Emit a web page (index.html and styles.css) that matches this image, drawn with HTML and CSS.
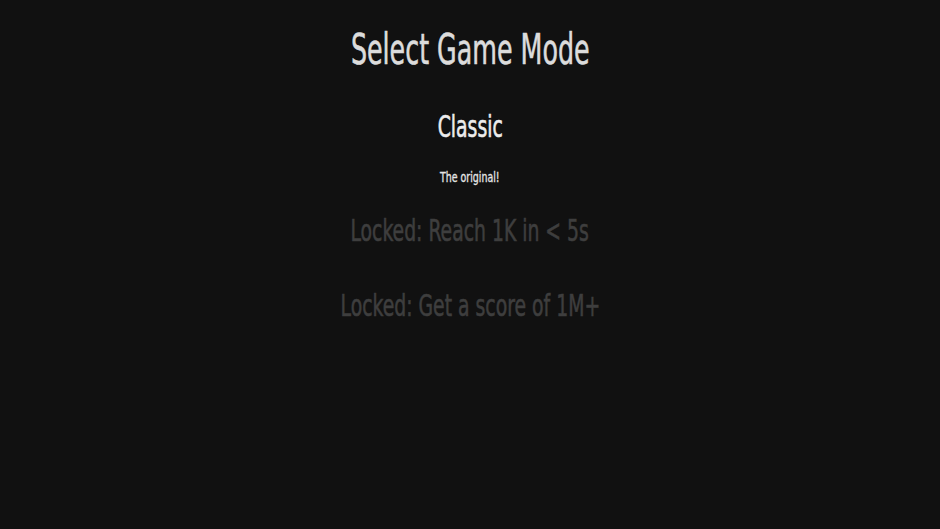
FILE: index.html
```html
<!DOCTYPE html>
<html lang="en">
<head>
<meta charset="utf-8">
<title>Select Game Mode</title>
<link rel="stylesheet" href="styles.css">
</head>
<body>
<main class="menu">
  <h1 class="title"><span class="narrow">Select Game Mode</span></h1>
  <ul class="modes">
    <li class="mode">
      <h2 class="mode-name"><span class="narrow">Classic</span></h2>
      <p class="mode-desc"><span class="narrow">The original!</span></p>
    </li>
    <li class="mode locked">
      <h2 class="mode-name"><span class="narrow">Locked: Reach 1K in &lt; 5s</span></h2>
    </li>
    <li class="mode locked">
      <h2 class="mode-name"><span class="narrow">Locked: Get a score of 1M+</span></h2>
    </li>
  </ul>
</main>
</body>
</html>
```

FILE: styles.css
```css
html, body {
  margin: 0;
  padding: 0;
  height: 100%;
  background: #111111;
}

body {
  font-family: "DejaVu Sans Condensed", "DejaVu Sans", sans-serif;
  color: #e0e0e0;
}

.menu {
  display: flex;
  flex-direction: column;
  align-items: center;
  padding-top: 28px;
  text-align: center;
}

.narrow {
  display: inline-block;
  white-space: nowrap;
  -webkit-text-stroke: 0.6px currentColor;
}

.title {
  margin: 0 0 40px;
  font-size: 43px;
  line-height: 43px;
  font-weight: normal;
  color: #dcdcdc;
}

.title .narrow {
  transform: scaleX(0.655);
}

.modes {
  list-style: none;
  margin: 0;
  padding: 0;
  display: flex;
  flex-direction: column;
  align-items: center;
  gap: 31px;
}

.mode {
  display: flex;
  flex-direction: column;
  align-items: center;
}

.mode-name {
  margin: 0;
  font-size: 31px;
  line-height: 31px;
  font-weight: normal;
  color: #ececec;
}

.mode-name .narrow {
  transform: scaleX(0.675);
}

.mode-desc {
  margin: 28px 0 0;
  font-size: 14px;
  line-height: 14px;
  color: #e6e6e6;
}

.mode-desc .narrow {
  transform: scaleX(0.75);
  -webkit-text-stroke: 0.3px currentColor;
}

.locked {
  padding-bottom: 13px;
}

.locked .mode-name {
  color: #3e3e3e;
}
```
